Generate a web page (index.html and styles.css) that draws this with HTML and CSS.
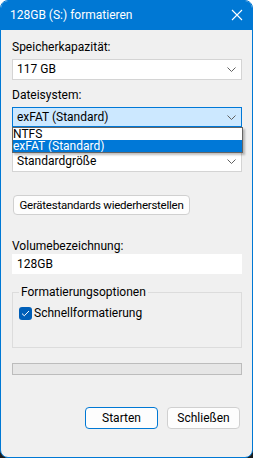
FILE: index.html
```html
<!DOCTYPE html>
<html lang="de">
<head>
<meta charset="utf-8">
<title>128GB (S:) formatieren</title>
<link rel="stylesheet" href="styles.css">
</head>
<body>
<div class="window">
  <div class="titlebar">
    <span class="title">128GB (S:) formatieren</span>
    <svg class="close" width="12" height="12" viewBox="0 0 12 12"><path d="M1 1 L11 11 M11 1 L1 11" stroke="#fff" stroke-width="1.1" fill="none"/></svg>
  </div>
  <div class="content">
    <div class="label first">Speicherkapazität:</div>
    <div class="combo"><span>117 GB</span><svg class="chev" width="9" height="5" viewBox="0 0 9 5"><path d="M0.5 0.5 L4.5 4.5 L8.5 0.5" stroke="#606060" fill="none"/></svg></div>

    <div class="label">Dateisystem:</div>
    <div class="dropwrap">
      <div class="combo focused"><span>exFAT (Standard)</span><svg class="chev" width="9" height="5" viewBox="0 0 9 5"><path d="M0.5 0.5 L4.5 4.5 L8.5 0.5" stroke="#606060" fill="none"/></svg></div>
      <ul class="droplist">
        <li>NTFS</li>
        <li class="sel">exFAT (Standard)</li>
      </ul>
    </div>

    <div class="label hidden">Größe der Zuordnungseinheiten:</div>
    <div class="combo"><span>Standardgröße</span><svg class="chev" width="9" height="5" viewBox="0 0 9 5"><path d="M0.5 0.5 L4.5 4.5 L8.5 0.5" stroke="#606060" fill="none"/></svg></div>

    <button class="btn restore">Gerätestandards wiederherstellen</button>

    <div class="label vol">Volumebezeichnung:</div>
    <div class="textbox">128GB</div>

    <fieldset class="group">
      <legend>Formatierungsoptionen</legend>
      <label class="check"><span class="box"><svg width="9" height="7" viewBox="0 0 9 7"><path d="M1 3.6 L3.3 5.8 L8 1" stroke="#fff" stroke-width="1" fill="none"/></svg></span>Schnellformatierung</label>
    </fieldset>

    <div class="progress"></div>

    <div class="actions">
      <button class="btn action primary">Starten</button>
      <button class="btn action">Schließen</button>
    </div>
  </div>
</div>
</body>
</html>
```
FILE: styles.css
```css
* { box-sizing: border-box; }
html, body { margin: 0; padding: 0; }
body {
  width: 253px;
  height: 458px;
  background: linear-gradient(to bottom, #ffffff 440px, #1b1b1b 440px);
  font-family: Roboto, "Noto Sans", sans-serif;
  font-size: 12px;
  color: #000;
  overflow: hidden;
}
.window {
  width: 253px;
  height: 458px;
  border: 1px solid #0078d4;
  border-radius: 8px;
  background: #f0f0f0;
  overflow: hidden;
  display: flex;
  flex-direction: column;
}
.titlebar {
  height: 30px;
  margin: -1px -1px 0 -1px;
  background: #0078d4;
  color: #fff;
  display: flex;
  align-items: center;
  justify-content: space-between;
  padding: 0 10px 0 10px;
  flex: none;
}
.title { font-size: 12px; line-height: 16px; }
.close { display: block; }
.content {
  flex: 1;
  padding: 0 10px 0 11px;
  display: flex;
  flex-direction: column;
}
.label { line-height: 15px; height: 15px; margin-top: 8px; white-space: nowrap; }
.label.first { margin-top: 10px; }
.label.hidden { visibility: hidden; margin-top: 5px; }
.combo {
  margin-top: 4px;
  height: 21px;
  background: #fff;
  border: 1px solid #d4d4d4;
  display: flex;
  align-items: center;
  justify-content: space-between;
  padding: 0 4px 0 4px;
  line-height: 15px;
}
.combo.focused { background: #cce8ff; border-color: #0078d7; height: 20px; }
.chev { display: block; margin-right: 1px; }
.dropwrap { position: relative; }
.droplist {
  position: absolute;
  left: 0;
  right: -1px;
  top: 24px;
  margin: 0;
  padding: 0;
  list-style: none;
  background: #fff;
  border: 1px solid #646464;
  box-shadow: 2px 2px 2px rgba(0,0,0,0.25);
  z-index: 2;
}
.droplist li { height: 12px; line-height: 12px; overflow: hidden; }
.droplist li.sel { background: #0078d7; color: #fff; }
.btn {
  font-family: inherit;
  font-size: 12px;
  color: #000;
  background: #fdfdfd;
  border: 1px solid #d0d0d0;
  border-radius: 4px;
  padding: 0;
  height: 21px;
  line-height: 15px;
  white-space: nowrap;
}
.restore {
  align-self: flex-start;
  margin-top: 23px;
  margin-left: 1px;
  width: 177px;
  height: 20px;
  font-size: 11.5px;
  letter-spacing: -0.25px;
}
.label.vol { margin-top: 24px; }
.textbox {
  height: 20px;
  background: #fff;
  line-height: 20px;
  padding-left: 5px;
}
.group {
  margin: 11px 0 0 0;
  padding: 0 0 0 6px;
  border: 1px solid #dcdcdc;
  height: 63px;
  min-inline-size: 0;
}
.group legend { padding: 0 2px; line-height: 14px; }
.check { display: flex; align-items: center; margin-top: 7px; }
.box {
  width: 13px; height: 13px;
  background: #005fb8;
  border-radius: 3px;
  display: flex; align-items: center; justify-content: center;
  margin-right: 2px;
}
.box svg { display: block; }
.progress {
  margin-top: 15px;
  height: 12px;
  background: #e6e6e6;
  border: 1px solid #bcbcbc;
}
.actions {
  margin-top: 32px;
  display: flex;
  justify-content: flex-end;
  gap: 9px;
  padding-right: 2px;
}
.action { width: 73px; height: 22px; }
.primary { border-color: #0078d4; }
```
